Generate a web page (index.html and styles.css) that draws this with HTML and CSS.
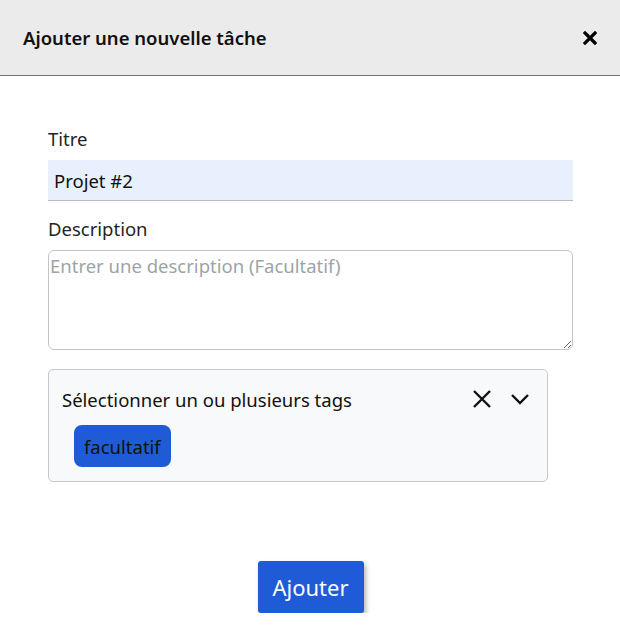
FILE: index.html
```html
<!DOCTYPE html>
<html lang="fr">
<head>
<meta charset="utf-8">
<title>Ajouter une nouvelle tâche</title>
<link rel="stylesheet" href="styles.css">
</head>
<body>
<div class="modal">
  <header class="modal-header">
    <h1 class="modal-title">Ajouter une nouvelle tâche</h1>
    <button class="close-btn" aria-label="Fermer">
      <svg width="14" height="14" viewBox="0 0 14 14"><path d="M2 2L12 12M12 2L2 12" stroke="#000" stroke-width="3.2" stroke-linecap="square"/></svg>
    </button>
  </header>
  <main class="modal-body">
    <label class="label" for="titre">Titre</label>
    <input id="titre" class="input-title" type="text" value="Projet #2">
    <label class="label label-desc" for="desc">Description</label>
    <textarea id="desc" class="textarea" placeholder="Entrer une description (Facultatif)"></textarea>
    <div class="tags">
      <div class="tags-top">
        <span class="tags-placeholder">Sélectionner un ou plusieurs tags</span>
        <span class="tags-icons">
          <svg width="20" height="20" viewBox="0 0 20 20"><path d="M2 2L18 18M18 2L2 18" stroke="#111" stroke-width="2.4"/></svg>
          <svg width="20" height="12" viewBox="0 0 20 12"><path d="M2 2L10 10L18 2" stroke="#111" stroke-width="2.4" fill="none"/></svg>
        </span>
      </div>
      <div class="tags-list">
        <span class="chip">facultatif</span>
      </div>
    </div>
    <div class="actions">
      <button class="btn-primary">Ajouter</button>
    </div>
  </main>
</div>
</body>
</html>
```
FILE: styles.css
```css
* { box-sizing: border-box; }
html, body { margin: 0; padding: 0; background: #fff; }
body { font-family: "Noto Sans", "Open Sans", sans-serif; color: #212529; }
.modal { width: 620px; }
.modal-header {
  height: 76px;
  background: #ebebeb;
  border-bottom: 1px solid #6c757d;
  display: flex;
  align-items: center;
  justify-content: space-between;
  padding: 0 23px 0 23px;
}
.modal-title { margin: 0; font-size: 18.5px; font-weight: 600; color: #111; }
.close-btn { border: 0; background: none; padding: 0; display: flex; margin-right: 0; }
.modal-body { padding: 50px 47px 0 48px; display: flex; flex-direction: column; }
.label { font-size: 18.5px; line-height: 26px; margin-bottom: 8px; color: #212529; }
.label-desc { margin-top: 15px; }
.input-title {
  height: 41px;
  border: 0;
  border-bottom: 1px solid #b9bcc0;
  background: #e8f0fe;
  font-family: inherit;
  font-size: 18.5px;
  padding: 0 6px;
  color: #111;
  outline: none;
}
.textarea {
  height: 100px;
  border: 1px solid #c4c4c4;
  border-radius: 6px;
  font-family: inherit;
  font-size: 18.5px;
  line-height: 26px;
  padding: 2px 1px;
  resize: vertical;
}
.textarea::placeholder { color: #9ea3a8; }
.tags {
  margin-top: 19px;
  width: 500px;
  height: 113px;
  background: #f8f9fa;
  border: 1px solid #c8c8c8;
  border-radius: 5px;
  padding: 16px 17px 0 13px;
}
.tags-top { display: flex; justify-content: space-between; align-items: center; height: 26px; }
.tags-placeholder { font-size: 18.5px; color: #111; }
.tags-icons { display: flex; align-items: center; gap: 18px; }
.tags-list { margin-top: 13px; padding-left: 12px; display: flex; }
.chip {
  background: #1f5bd6;
  color: #111;
  border-radius: 8px;
  font-size: 18.5px;
  padding: 0 10px;
  height: 42px;
  display: flex;
  align-items: center;
}
.actions { display: flex; justify-content: center; margin-top: 79px; padding-right: 0; }
.btn-primary {
  background: #1f5bd6;
  color: #fff;
  border: 0;
  border-radius: 3px;
  font-family: inherit;
  font-size: 22px;
  width: 106px;
  height: 52px;
  box-shadow: 2px 3px 5px rgba(0,0,0,0.3);
}
```
